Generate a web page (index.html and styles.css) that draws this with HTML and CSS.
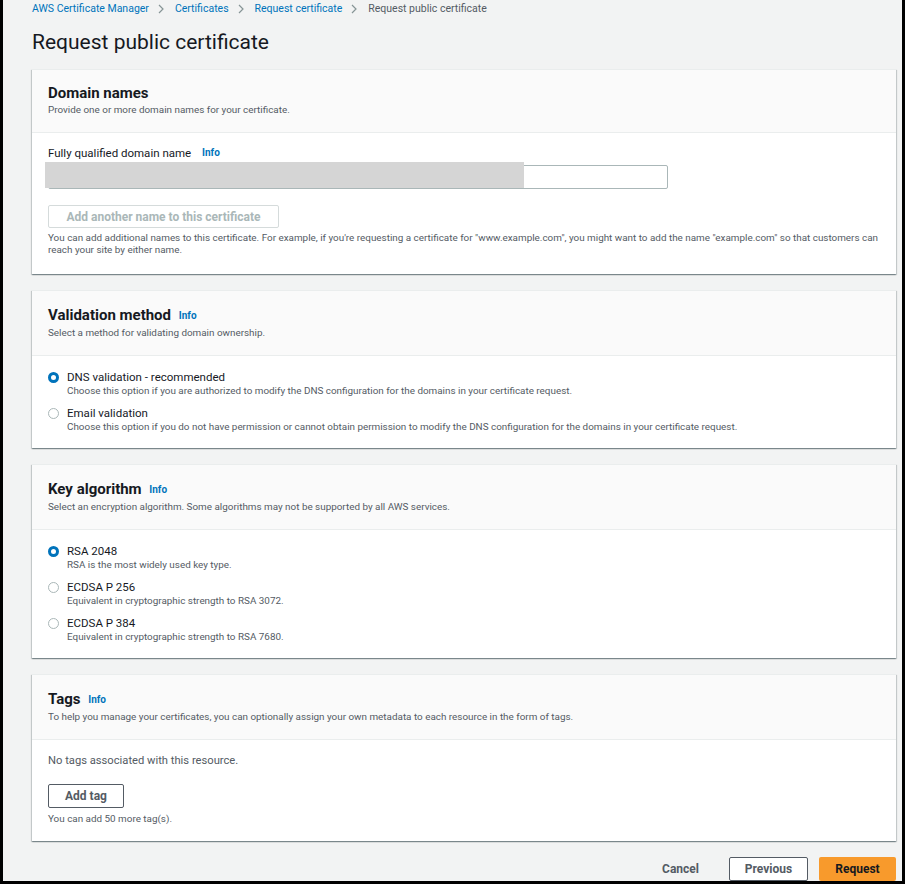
FILE: index.html
```html
<!DOCTYPE html>
<html>
<head>
    <title>Request public certificate</title>
    <link rel="stylesheet" href="styles.css">
</head>
<body>
    <div class="frame">
        <div class="page">
            <nav class="breadcrumbs">
                <a href="#">AWS Certificate Manager</a>
                <svg class="chev" width="6" height="10" viewBox="0 0 6 10"><polyline points="1,1 5,5 1,9" fill="none" stroke="#879596" stroke-width="1.2"/></svg>
                <a href="#">Certificates</a>
                <svg class="chev" width="6" height="10" viewBox="0 0 6 10"><polyline points="1,1 5,5 1,9" fill="none" stroke="#879596" stroke-width="1.2"/></svg>
                <a href="#">Request certificate</a>
                <svg class="chev" width="6" height="10" viewBox="0 0 6 10"><polyline points="1,1 5,5 1,9" fill="none" stroke="#879596" stroke-width="1.2"/></svg>
                <span class="current">Request public certificate</span>
            </nav>

            <h1>Request public certificate</h1>

            <!-- domain names -->
            <div class="container first">
                <div class="container-header">
                    <h2>Domain names</h2>
                    <p class="desc">Provide one or more domain names for your certificate.</p>
                </div>
                <div class="container-body">
                    <label class="field-label" for="domain">Fully qualified domain name <a class="info" href="#">Info</a></label>
                    <div class="input-wrap">
                        <input type="text" id="domain" class="text-input">
                        <div class="redacted"></div>
                    </div>
                    <button class="btn btn-disabled" disabled>Add another name to this certificate</button>
                    <p class="hint">You can add additional names to this certificate. For example, if you're requesting a certificate for "www.example.com", you might want to add the name "example.com" so that customers can reach your site by either name.</p>
                </div>
            </div>

            <!-- validation -->
            <div class="container">
                <div class="container-header">
                    <h2>Validation method <a class="info" href="#">Info</a></h2>
                    <p class="desc">Select a method for validating domain ownership.</p>
                </div>
                <div class="container-body radios">
                    <div class="radio">
                        <span class="dot checked"></span>
                        <div>
                            <div class="radio-label">DNS validation - recommended</div>
                            <div class="radio-desc">Choose this option if you are authorized to modify the DNS configuration for the domains in your certificate request.</div>
                        </div>
                    </div>
                    <div class="radio">
                        <span class="dot"></span>
                        <div>
                            <div class="radio-label">Email validation</div>
                            <div class="radio-desc">Choose this option if you do not have permission or cannot obtain permission to modify the DNS configuration for the domains in your certificate request.</div>
                        </div>
                    </div>
                </div>
            </div>

            <!-- key algorithm -->
            <div class="container">
                <div class="container-header">
                    <h2>Key algorithm <a class="info" href="#">Info</a></h2>
                    <p class="desc">Select an encryption algorithm. Some algorithms may not be supported by all AWS services.</p>
                </div>
                <div class="container-body radios">
                    <div class="radio">
                        <span class="dot checked"></span>
                        <div>
                            <div class="radio-label">RSA 2048</div>
                            <div class="radio-desc">RSA is the most widely used key type.</div>
                        </div>
                    </div>
                    <div class="radio">
                        <span class="dot"></span>
                        <div>
                            <div class="radio-label">ECDSA P 256</div>
                            <div class="radio-desc">Equivalent in cryptographic strength to RSA 3072.</div>
                        </div>
                    </div>
                    <div class="radio">
                        <span class="dot"></span>
                        <div>
                            <div class="radio-label">ECDSA P 384</div>
                            <div class="radio-desc">Equivalent in cryptographic strength to RSA 7680.</div>
                        </div>
                    </div>
                </div>
            </div>

            <!-- tags -->
            <div class="container">
                <div class="container-header">
                    <h2>Tags <a class="info" href="#">Info</a></h2>
                    <p class="desc">To help you manage your certificates, you can optionally assign your own metadata to each resource in the form of tags.</p>
                </div>
                <div class="container-body tags-body">
                    <p class="empty">No tags associated with this resource.</p>
                    <button class="btn btn-normal">Add tag</button>
                    <p class="hint">You can add 50 more tag(s).</p>
                </div>
            </div>

            <div class="actions">
                <button class="btn btn-link">Cancel</button>
                <button class="btn btn-normal btn-prev">Previous</button>
                <button class="btn btn-primary">Request</button>
            </div>
        </div>
    </div>
</body>
</html>
```

FILE: styles.css
```css
body {
    margin: 0;
    background-color: #000;
    font-family: Roboto, "Liberation Sans", Arial, sans-serif;
    color: #16191f;
}

.frame {
    width: 905px;
    height: 884px;
    padding: 0 3px 3px 3px;
    box-sizing: border-box;
    overflow: hidden;
}

.page {
    height: 100%;
    background-color: #f2f3f3;
    padding: 0 6px 0 29px;
    box-sizing: border-box;
    overflow: hidden;
}

.breadcrumbs {
    display: flex;
    align-items: center;
    font-size: 10.5px;
    line-height: 14px;
    padding-top: 2px;
    white-space: nowrap;
}

.breadcrumbs a {
    color: #0073bb;
    text-decoration: none;
}

.breadcrumbs .chev {
    margin: 0 11px 0 9px;
}

.breadcrumbs .current {
    color: #545b64;
}

h1 {
    font-size: 21px;
    font-weight: 400;
    line-height: 28px;
    margin: 12px 0 13px 0;
    color: #16191f;
}

.container {
    background-color: #fff;
    border-top: 1px solid #eaeded;
    box-shadow: 0 1px 1px 0 rgba(0, 28, 36, 0.3), 1px 1px 1px 0 rgba(0, 28, 36, 0.15), -1px 1px 1px 0 rgba(0, 28, 36, 0.15);
    margin-bottom: 16px;
}

.container-header {
    background-color: #fafafa;
    border-bottom: 1px solid #eaeded;
    padding: 15px 16px 16px 16px;
}

/* first header has no info link, a bit shorter */
.first .container-header {
    padding: 14px 16px 16px 16px;
}

h2 {
    font-size: 15px;
    font-weight: 700;
    line-height: 18px;
    margin: 0;
}

.info {
    color: #0073bb;
    font-size: 10px;
    font-weight: 700;
    text-decoration: none;
    margin-left: 4px;
    vertical-align: 1px;
}

.desc {
    font-size: 9.9px;
    line-height: 13px;
    color: #545b64;
    margin: 1px 0 0 0;
}

.container-body {
    padding: 13px 16px 18px 16px;
}

.field-label {
    display: block;
    font-size: 11.5px;
    line-height: 14px;
}

.field-label .info {
    margin-left: 8px;
}

.input-wrap {
    position: relative;
    width: 620px;
    margin-top: 5px;
}

.text-input {
    display: block;
    width: 100%;
    height: 24px;
    box-sizing: border-box;
    border: 1px solid #aab7b8;
    border-radius: 2px;
    background: #fff;
}

.redacted {
    position: absolute;
    left: -3px;
    top: -3px;
    width: 479px;
    height: 26px;
    background-color: #d5d5d5;
}

.btn {
    font-family: inherit;
    font-weight: 700;
    font-size: 12px;
    border-radius: 2px;
    background: #fff;
    cursor: pointer;
    padding: 0;
}

.btn-disabled {
    margin-top: 16px;
    width: 231px;
    height: 23px;
    border: 1px solid #d5dbdb;
    color: #aab7b8;
    cursor: default;
}

.hint {
    font-size: 9.9px;
    line-height: 12px;
    color: #545b64;
    margin: 4px 0 0 0;
}

.radios {
    display: flex;
    flex-direction: column;
    gap: 9px;
    padding-top: 14px;
    padding-bottom: 15px;
}

.radio {
    display: flex;
    align-items: flex-start;
    gap: 8px;
}

.dot {
    flex: none;
    width: 11px;
    height: 11px;
    box-sizing: border-box;
    border-radius: 50%;
    border: 1px solid #aab7b8;
    margin-top: 2px;
    background: #fff;
}

.dot.checked {
    border: 3.5px solid #0073bb;
}

.radio-label {
    font-size: 11.5px;
    line-height: 14px;
}

.radio-desc {
    font-size: 9.9px;
    line-height: 13px;
    color: #545b64;
}

.tags-body {
    padding-top: 14px;
    padding-bottom: 16px;
}

.empty {
    font-size: 11.2px;
    line-height: 14px;
    color: #545b64;
    margin: 0;
}

.btn-normal {
    border: 1px solid #545b64;
    color: #545b64;
    height: 24px;
}

.tags-body .btn-normal {
    margin-top: 16px;
    width: 76px;
}

.tags-body .hint {
    margin-top: 5px;
}

.actions {
    display: flex;
    justify-content: flex-end;
    gap: 11px;
    margin-top: 0;
}

.btn-link {
    border: none;
    background: none;
    color: #545b64;
    height: 24px;
    padding: 0 19px;
}

.btn-prev {
    width: 79px;
}

.btn-primary {
    width: 77px;
    height: 24px;
    border: none;
    background-color: #f89a2c;
    color: #16191f;
}
```
